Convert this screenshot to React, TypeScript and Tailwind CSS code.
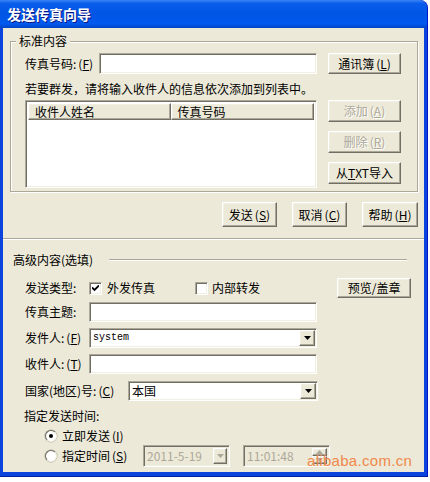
import { ReactNode } from 'react';
import clsx from 'clsx';

const raised =
  'bg-[#ECE9D8] border border-t-white border-l-white border-r-[#716F64] border-b-[#716F64] shadow-[inset_-1px_-1px_0_#ACA899,inset_1px_1px_0_#F1EFE2]';
const sunken =
  'border border-t-[#ACA899] border-l-[#ACA899] border-r-white border-b-white shadow-[inset_1px_1px_0_#716F64,inset_-1px_-1px_0_#F1EFE2]';
const etched = 'h-[2px] border-t border-t-[#ACA899] border-b border-b-white';

// 带下划线的助记键，例如 (F)
function Mn({ c }: { c: string }) {
  return (
    <span className="ml-[2px]">
      (<u className="underline-offset-[1px]">{c}</u>)
    </span>
  );
}

function Btn({
  children,
  className,
  disabled = false,
}: {
  children: ReactNode;
  className?: string;
  disabled?: boolean;
}) {
  return (
    <button
      className={clsx(
        raised,
        'flex items-center justify-center text-[12px] leading-[14px] cursor-default',
        disabled ? 'text-[#ACA899] [text-shadow:1px_1px_0_#fff]' : 'text-black',
        className
      )}
    >
      {children}
    </button>
  );
}

function Arrow({ up = false, gray = false }: { up?: boolean; gray?: boolean }) {
  return (
    <svg width="7" height="4" viewBox="0 0 7 4" className={up ? 'rotate-180' : ''}>
      <path d="M0 0h7L3.5 4z" fill={gray ? '#ACA899' : '#000'} />
    </svg>
  );
}

function Combo({ value, className, mono = false }: { value: string; className?: string; mono?: boolean }) {
  return (
    <div className={clsx(sunken, 'bg-white h-[20px] flex items-center p-[1px] pl-[3px]', className)}>
      <span
        className={clsx(
          'flex-1 whitespace-nowrap',
          mono ? "font-['Liberation_Mono',monospace] text-[10px] leading-[12px]" : 'text-[12px] leading-[14px]'
        )}
      >
        {value}
      </span>
      <div className={clsx(raised, 'w-[16px] h-[16px] flex items-center justify-center')}>
        <Arrow />
      </div>
    </div>
  );
}

function Check({ checked = false }: { checked?: boolean }) {
  return (
    <div className={clsx(sunken, 'w-[13px] h-[13px] bg-white flex items-center justify-center shrink-0')}>
      {checked && (
        <svg width="7" height="7" viewBox="0 0 7 7">
          <path d="M0 2.5l2.5 2.5L7 0.5" stroke="#000" strokeWidth="1.8" fill="none" />
        </svg>
      )}
    </div>
  );
}

function Radio({ checked = false }: { checked?: boolean }) {
  return (
    <div className="w-[12px] h-[12px] rounded-full bg-white border border-t-[#716F64] border-l-[#716F64] border-r-[#F1EFE2] border-b-[#F1EFE2] shadow-[0_0_0_0.5px_#ACA899] flex items-center justify-center shrink-0">
      {checked && <div className="w-[4px] h-[4px] rounded-full bg-black" />}
    </div>
  );
}

export default function App() {
  return (
    <div className="w-[430px] h-[482px] bg-white relative overflow-hidden font-['Noto_Sans_CJK_SC','Liberation_Sans',sans-serif] text-[12px] leading-[14px] text-black">
      <div className="w-[428px] h-[477px] flex flex-col bg-[#0A44DD] rounded-tr-[8px] border-r border-r-[#0019CF] border-b border-b-[#001EA0]">
        {/* 标题栏 */}
        <div className="h-[28px] shrink-0 rounded-tr-[8px] bg-[linear-gradient(to_bottom,#3A86F7_0%,#0A5DEB_12%,#0055E5_50%,#0059EE_85%,#0044C6_100%)] flex items-center pl-[7px]">
          <span className="text-white font-bold text-[14px] leading-[16px] [text-shadow:1px_1px_0_#0A1883]">
            发送传真向导
          </span>
        </div>

        <div className="flex-1 ml-[3px] mr-[3px] mb-[4px] bg-[#ECE9D8] flex flex-col">
          {/* 上半部分 */}
          <div className="h-[210px] shrink-0 flex flex-col">
            <div className="relative ml-[7px] mt-[13px] w-[408px] h-[151px] border border-[#ACA899] shadow-[inset_1px_1px_0_#fff,1px_1px_0_#fff] pl-[14px] pt-[11px] flex flex-col">
              <span className="absolute -top-[8px] left-[5px] px-[3px] bg-[#ECE9D8]">标准内容</span>

              <div className="flex items-center h-[21px]">
                <span className="w-[74px] shrink-0">
                  传真号码:
                  <Mn c="F" />
                </span>
                <div className={clsx(sunken, 'bg-white w-[218px] h-[21px]')} />
                <Btn className="ml-[11px] w-[73px] h-[21px]">
                  通讯簿<Mn c="L" />
                </Btn>
              </div>

              <div className="mt-[8px] h-[14px] whitespace-nowrap">若要群发，请将输入收件人的信息依次添加到列表中。</div>

              <div className="mt-[4px] flex">
                <div className={clsx(sunken, 'bg-white w-[292px] h-[88px] p-[2px]')}>
                  <div className="flex h-[17px]">
                    <div className={clsx(raised, 'w-[143px] h-[17px] pl-[6px] flex items-center')}>收件人姓名</div>
                    <div className={clsx(raised, 'w-[144px] h-[17px] pl-[6px] flex items-center')}>传真号码</div>
                  </div>
                </div>
                <div className="ml-[11px] flex flex-col gap-[9px]">
                  <Btn disabled className="w-[73px] h-[22px]">
                    添加<Mn c="A" />
                  </Btn>
                  <Btn disabled className="w-[73px] h-[22px]">
                    删除<Mn c="R" />
                  </Btn>
                  <Btn className="w-[73px] h-[22px]">
                    从<u>T</u>XT导入
                  </Btn>
                </div>
              </div>
            </div>

            <div className="mt-[10px] flex justify-end gap-[15px] pr-[6px]">
              <Btn className="w-[55px] h-[25px]">
                发送<Mn c="S" />
              </Btn>
              <Btn className="w-[55px] h-[25px]">
                取消<Mn c="C" />
              </Btn>
              <Btn className="w-[56px] h-[25px]">
                帮助<Mn c="H" />
              </Btn>
            </div>
          </div>

          <div className={etched} />

          {/* 高级内容 */}
          <div className="flex-1 flex flex-col">
            <div className="mt-[13px] h-[14px] flex items-center pl-[10px]">
              <span>高级内容(选填)</span>
              <div className={clsx(etched, 'flex-1 ml-[16px] mr-[17px]')} />
            </div>

            <div className="mt-[11px] h-[20px] flex items-center pl-[22px]">
              <span className="w-[64px] shrink-0">发送类型:</span>
              <Check checked />
              <span className="ml-[5px]">外发传真</span>
              <div className="ml-[40px]">
                <Check />
              </div>
              <span className="ml-[4px]">内部转发</span>
              <Btn className="ml-[77px] w-[74px] h-[20px]">预览/盖章</Btn>
            </div>

            <div className="mt-[4px] h-[20px] flex items-center pl-[22px]">
              <span className="w-[64px] shrink-0">传真主题:</span>
              <div className={clsx(sunken, 'bg-white w-[228px] h-[20px]')} />
            </div>

            <div className="mt-[6px] h-[20px] flex items-center pl-[22px]">
              <span className="w-[64px] shrink-0">
                发件人:<Mn c="F" />
              </span>
              <Combo value="system" mono className="w-[228px]" />
            </div>

            <div className="mt-[6px] h-[20px] flex items-center pl-[22px]">
              <span className="w-[64px] shrink-0">
                收件人:<Mn c="T" />
              </span>
              <div className={clsx(sunken, 'bg-white w-[228px] h-[20px]')} />
            </div>

            <div className="mt-[7px] h-[20px] flex items-center pl-[22px]">
              <span className="w-[103px] shrink-0 whitespace-nowrap">
                国家(地区)号:<Mn c="C" />
              </span>
              <Combo value="本国" className="w-[190px]" />
            </div>

            <div className="mt-[8px] h-[14px] pl-[21px]">指定发送时间:</div>

            <div className="mt-[5px] h-[16px] flex items-center pl-[42px]">
              <Radio checked />
              <span className="ml-[5px]">
                立即发送<Mn c="I" />
              </span>
            </div>

            <div className="mt-[1px] h-[22px] flex items-center pl-[42px]">
              <Radio />
              <span className="ml-[5px] w-[81px] shrink-0">
                指定时间<Mn c="S" />
              </span>
              <div className={clsx(sunken, 'w-[87px] h-[22px] flex items-center p-[2px] pl-[3px]')}>
                <span className="flex-1 text-[#ACA899] text-[12px] leading-[14px]">2011-5-19</span>
                <div className={clsx(raised, 'w-[14px] h-[16px] flex items-center justify-center')}>
                  <Arrow gray />
                </div>
              </div>
              <div className={clsx(sunken, 'ml-[13px] w-[87px] h-[22px] flex items-center p-[2px] pl-[3px]')}>
                <span className="flex-1 text-[#ACA899] text-[12px] leading-[14px]">11:01:48</span>
                <div className="w-[15px] h-[16px] flex flex-col">
                  <div className={clsx(raised, 'h-[8px] flex items-center justify-center')}>
                    <Arrow up gray />
                  </div>
                  <div className={clsx(raised, 'h-[8px] flex items-center justify-center')}>
                    <Arrow gray />
                  </div>
                </div>
              </div>
            </div>
          </div>
        </div>
      </div>

      {/* 水印 */}
      <span className="absolute left-[307px] top-[452px] text-[15px] leading-[18px] text-[#F0884A] font-['Liberation_Sans',sans-serif] tracking-[0.3px]">
        alibaba.com.cn
      </span>
    </div>
  );
}
